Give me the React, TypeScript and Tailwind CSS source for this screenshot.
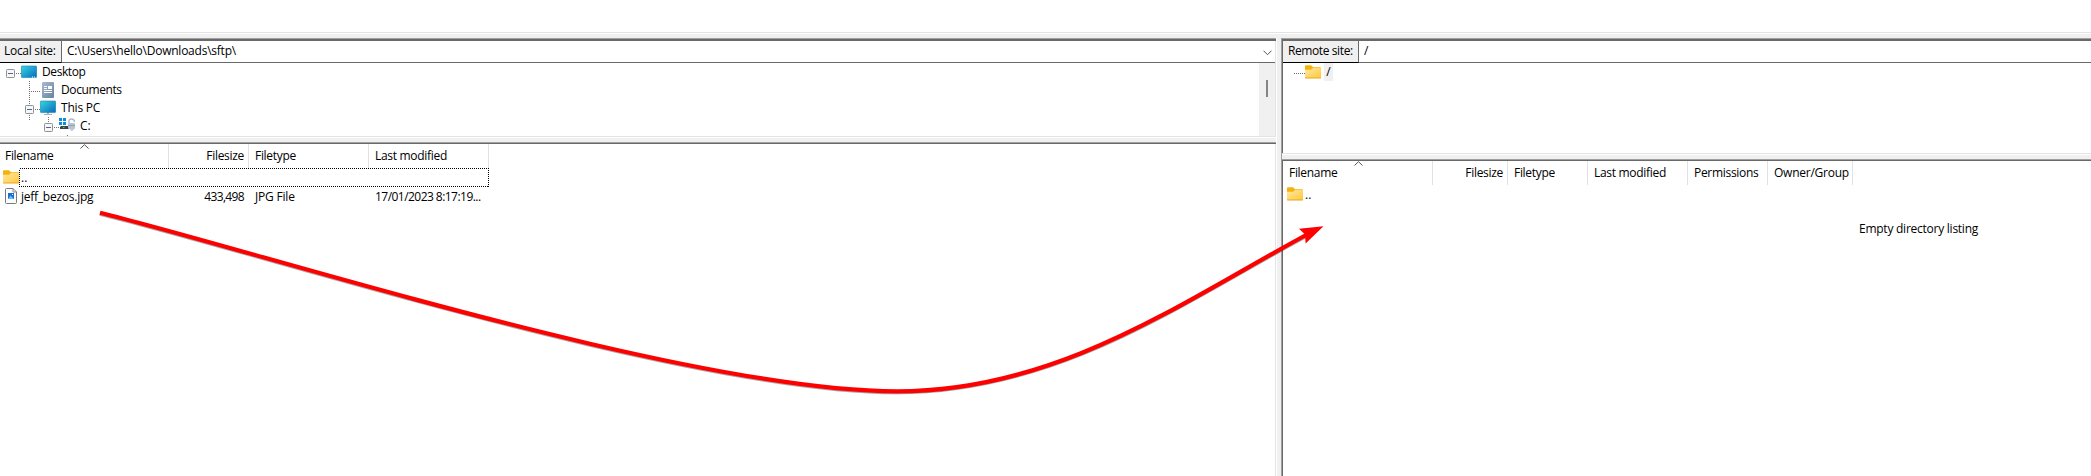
import type { ReactNode } from 'react';

function Folder() {
  return (
    <svg width="16" height="14" viewBox="0 0 16 14" className="block shrink-0">
      <defs>
        <linearGradient id="folder" x1="0" y1="0" x2="1" y2="1">
          <stop offset="0" stopColor="#ffe9a0" />
          <stop offset="1" stopColor="#ffc83d" />
        </linearGradient>
      </defs>
      <path d="M0 1.2Q0 .3 1 .3H6L8 2.2H15Q16 2.2 16 3.2V8H0Z" fill="#f5b10c" />
      <path d="M0 4.8H6L8 3H16V13H0Z" fill="url(#folder)" />
      <path d="M0 12.5H16V13Q16 13.4 15.5 13.4H.5Q0 13.4 0 13Z" fill="#eba51b" />
    </svg>
  );
}

function TreeLines() {
  return (
    <svg width="90" height="73" viewBox="0 0 90 73" className="absolute left-0 top-0" shapeRendering="crispEdges">
      <g stroke="#707070" strokeDasharray="1 1" fill="none">
        <path d="M16 10.5H21" />
        <path d="M29.5 18V58" />
        <path d="M31 28.5H41" />
        <path d="M35 46.5H41" />
        <path d="M48.5 54V64" />
        <path d="M54 64.5H60" />
        <path d="M67.5 72V73" />
      </g>
    </svg>
  );
}

function Toggle() {
  return (
    <svg width="9" height="9" viewBox="0 0 9 9" className="block shrink-0">
      <rect x=".5" y=".5" width="8" height="8" rx=".8" fill="#f7f7f7" stroke="#919191" />
      <path d="M2 4.5H7" stroke="#4b63a7" />
    </svg>
  );
}

function Screen({ stand = false }: { stand?: boolean }) {
  return (
    <svg width="16" height="16" viewBox="0 0 16 16" className="block shrink-0">
      <defs>
        <linearGradient id="screen" x1="0" y1="0" x2="1" y2="1">
          <stop offset="0" stopColor="#34d8e2" />
          <stop offset="1" stopColor="#0b67bd" />
        </linearGradient>
      </defs>
      {stand && <path d="M7 12H9V14H12V15H4V14H7Z" fill="#aab4bc" />}
      <rect x=".3" y="1" width="15.4" height="11.6" rx="1" fill="url(#screen)" stroke="#1480a8" strokeWidth=".6" />
      {!stand && <path d="M11 12H12M13 12H14" stroke="#fff" />}
    </svg>
  );
}

function DocumentsIcon() {
  return (
    <svg width="16" height="16" viewBox="0 0 16 16" className="block shrink-0">
      <defs>
        <linearGradient id="docs" x1="0" y1="0" x2="1" y2="1">
          <stop offset="0" stopColor="#a9bbd0" />
          <stop offset="1" stopColor="#6681a2" />
        </linearGradient>
      </defs>
      <rect x="2" y="0" width="12" height="16" rx="1" fill="url(#docs)" />
      <path d="M4 4.5H7M4 6.5H7M4 8.5H12M4 10.5H12" stroke="#fff" />
      <rect x="8" y="4" width="4" height="3" fill="#fff" />
    </svg>
  );
}

function DriveIcon() {
  return (
    <svg width="16" height="14" viewBox="0 0 16 14" className="block shrink-0">
      <path d="M0 0H3V3H0ZM4 0H7V3H4ZM0 4H3V7H0ZM4 4H7V7H4Z" fill="#0a90dc" />
      <path d="M2 8H12V11H1V9Z" fill="#3e4145" />
      <rect x="4" y="9" width="1.5" height="1" fill="#39e04a" />
      <path d="M10 5V3Q10 1 12.5 1Q15.5 1 15.5 4" fill="none" stroke="#aeb9c6" strokeWidth="1.4" />
      <rect x="9" y="5" width="7" height="6" rx="1" fill="#b5c4d4" />
      <path d="M9 7.5H16" stroke="#8ca4bd" />
      <path d="M11 11H15L13.5 13H12Z" fill="#c7ccd3" />
    </svg>
  );
}

function ImageFile() {
  return (
    <svg width="12" height="16" viewBox="0 0 12 16" className="block shrink-0">
      <path d="M.5 1.5Q.5.5 1.5.5H8L11.5 4V14.5Q11.5 15.5 10.5 15.5H1.5Q.5 15.5.5 14.5Z" fill="#fafafa" stroke="#7b7b7b" />
      <path d="M8 .5V4H11.5" fill="none" stroke="#7b7b7b" strokeWidth=".8" />
      <rect x="3" y="5" width="6" height="6" fill="#1c6fce" />
      <path d="M3 11L5.5 7.5L9 11Z" fill="#63c0f5" />
      <rect x="7" y="6" width="1" height="1" fill="#fff" />
    </svg>
  );
}

function SortCaret() {
  return (
    <svg width="9" height="5" viewBox="0 0 9 5" className="block">
      <path d="M.5 4.5L4.5.7L8.5 4.5" fill="none" stroke="#555" />
    </svg>
  );
}

function TopEdge() {
  return (
    <>
      <div className="h-px bg-[#a0a0a0]" />
      <div className="h-px bg-[#696969]" />
    </>
  );
}

function Column({ className, children }: { className: string; children: ReactNode }) {
  return <div className={`h-6 shrink-0 border-r border-[#e2e2e2] pt-[3px] leading-[18px] ${className}`}>{children}</div>;
}

function LocalPane() {
  return (
    <section className="flex w-[1276px] flex-col">
      <TopEdge />
      <div className="flex h-[23px] items-stretch border-t border-[#696969]">
        <div className="w-[62px] border-r border-b border-r-[#696969] border-b-black bg-[#f0f0f0] pl-1 pt-px leading-[18px] tracking-[-0.3px]">
          Local site:
        </div>
        <div className="flex flex-1 items-start justify-between border-b border-[#696969] bg-white pl-[5px] pr-[3px] pt-px leading-[18px]">
          <span className="tracking-[-0.23px]">C:\Users\hello\Downloads\sftp\</span>
          <svg width="9" height="6" viewBox="0 0 9 6" className="mt-2 block">
            <path d="M.5.7L4.5 4.7L8.5.7" fill="none" stroke="#555" />
          </svg>
        </div>
        <div className="w-px bg-[#e3e3e3]" />
      </div>
      <div className="flex h-[73px] overflow-hidden border-r border-[#e3e3e3] bg-white">
        <div className="relative flex-1 leading-[18px]">
          <TreeLines />
          <div className="relative flex h-[18px] items-center pl-[6px]">
            <div className="mt-[3px]"><Toggle /></div>
            <div className="ml-[6px] pt-[2px]"><Screen /></div>
            <span className="ml-[5px] tracking-[-0.4px]">Desktop</span>
          </div>
          <div className="relative flex h-[18px] items-center pl-[40px]">
            <DocumentsIcon />
            <span className="ml-[5px] tracking-[-0.4px]">Documents</span>
          </div>
          <div className="relative flex h-[18px] items-center pl-[25px]">
            <div className="mt-[3px]"><Toggle /></div>
            <div className="ml-[6px]"><Screen stand /></div>
            <span className="ml-[5px] tracking-[-0.2px]">This PC</span>
          </div>
          <div className="relative flex h-[18px] items-center pl-[44px]">
            <div className="mt-[3px]"><Toggle /></div>
            <div className="ml-[6px] pb-[2px]"><DriveIcon /></div>
            <span className="ml-[5px]">C:</span>
          </div>
        </div>
        <div className="w-4 bg-[#f0f0f0] pl-[7px] pt-[17px]">
          <div className="h-[17px] w-[2px] bg-[#858585]" />
        </div>
      </div>
      <div className="h-px bg-[#e3e3e3]" />
      <div className="h-px bg-white" />
      <div className="h-1 bg-[#f0f0f0]" />
      <TopEdge />
      <div className="flex-1 border-r border-[#e3e3e3] bg-white">
        <div className="relative flex">
          <div className="absolute left-[80px] top-0"><SortCaret /></div>
          <Column className="w-[169px] pl-[5px] tracking-[-0.3px]">Filename</Column>
          <Column className="w-[80px] pr-[4px] text-right tracking-[-0.3px]">Filesize</Column>
          <Column className="w-[120px] pl-[6px] tracking-[-0.3px]">Filetype</Column>
          <Column className="w-[120px] pl-[6px] tracking-[-0.3px]">Last modified</Column>
        </div>
        <div className="flex h-[19px] w-[489px] pl-[3px]">
          <div className="mt-[2px]"><Folder /></div>
          <svg width="470" height="19" viewBox="0 0 470 19" className="-mr-[470px] block shrink-0" shapeRendering="crispEdges">
            <rect x=".5" y=".5" width="469" height="18" fill="none" stroke="#000" strokeDasharray="1 1" />
          </svg>
          <span className="ml-[2px] leading-[19px]">..</span>
        </div>
        <div className="flex h-[20px] w-[489px] leading-[19px]">
          <div className="flex w-[169px] pl-[5px]">
            <div className="pt-px"><ImageFile /></div>
            <span className="ml-1 tracking-[-0.25px]">jeff_bezos.jpg</span>
          </div>
          <div className="w-[80px] pr-[5px] text-right tracking-[-0.65px]">433,498</div>
          <div className="w-[120px] pl-[6px] tracking-[-0.2px]">JPG File</div>
          <div className="w-[120px] whitespace-nowrap pl-[6px] tracking-[-0.54px]">17/01/2023 8:17:19...</div>
        </div>
      </div>
    </section>
  );
}

function RemotePane() {
  return (
    <section className="flex flex-1 flex-col border-l border-[#a0a0a0]">
      <TopEdge />
      <div className="flex flex-1 flex-col border-l border-[#696969]">
        <div className="flex h-[23px] border-t border-[#696969]">
          <div className="w-[76px] border-r border-b border-r-[#696969] border-b-black bg-[#f0f0f0] pl-[5px] pt-px leading-[18px] tracking-[-0.4px]">
            Remote site:
          </div>
          <div className="flex-1 border-b border-[#696969] bg-white pl-[5px] pt-px leading-[18px]">/</div>
        </div>
        <div className="h-[90px] bg-white">
          <div className="flex h-[18px] items-center pl-[11px]">
            <svg width="11" height="1" viewBox="0 0 11 1" className="mt-[2px] block" shapeRendering="crispEdges">
              <path d="M0 .5H11" stroke="#707070" strokeDasharray="1 1" />
            </svg>
            <div><Folder /></div>
            <span className="ml-[3px] w-[9px] bg-[#f0f0f0] text-center leading-[18px]">/</span>
          </div>
        </div>
      </div>
      <div className="h-px bg-[#e3e3e3]" />
      <div className="h-px bg-white" />
      <div className="h-1 bg-[#f0f0f0]" />
      <TopEdge />
      <div className="h-[315px] border-l border-[#696969] bg-white">
        <div className="relative flex">
          <div className="absolute left-[71px] top-0"><SortCaret /></div>
          <Column className="w-[150px] pl-[6px] tracking-[-0.3px]">Filename</Column>
          <Column className="w-[75px] pr-[4px] text-right tracking-[-0.3px]">Filesize</Column>
          <Column className="w-[80px] pl-[6px] tracking-[-0.3px]">Filetype</Column>
          <Column className="w-[100px] pl-[6px] tracking-[-0.3px]">Last modified</Column>
          <Column className="w-[80px] pl-[6px] tracking-[-0.3px]">Permissions</Column>
          <Column className="w-[85px] pl-[6px] tracking-[-0.25px]">Owner/Group</Column>
        </div>
        <div className="flex h-[19px] pl-[4px]">
          <div className="mt-[2px]"><Folder /></div>
          <span className="ml-[2px] leading-[19px]">..</span>
        </div>
        <div className="mt-[16px] pl-[576px] leading-[18px] tracking-[-0.25px]">Empty directory listing</div>
      </div>
    </section>
  );
}

const dragCurve = 'M100 212.7C260 252 690 391.3 897 391.3C1060 391.3 1185 300 1308 234';

export default function App() {
  return (
    <main className="relative flex h-[476px] w-[2091px] flex-col overflow-hidden bg-white pt-8 font-['Open_Sans','Noto_Sans',sans-serif] text-[12px] text-black">
      <div className="h-px bg-[#e3e3e3]" />
      <div className="h-px bg-white" />
      <div className="flex flex-1 bg-[#f0f0f0] pt-1">
        <LocalPane />
        <div className="w-[5px] border-l border-white" />
        <RemotePane />
      </div>
      <svg width="2091" height="476" viewBox="0 0 2091 476" className="pointer-events-none absolute left-0 top-0">
        <path d={dragCurve} fill="none" stroke="#000" strokeOpacity=".35" strokeWidth="4.2" transform="translate(0 .9)" />
        <path d={dragCurve} fill="none" stroke="#ff0000" strokeWidth="4.2" />
        <path d="M1323.5 226.2L1299 228.7L1305 234.5L1305.6 243.5Z" fill="#ff0000" />
      </svg>
    </main>
  );
}
